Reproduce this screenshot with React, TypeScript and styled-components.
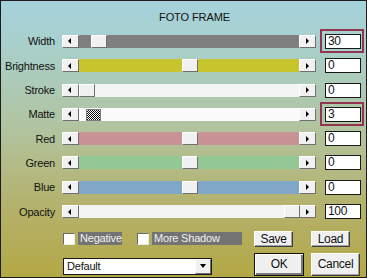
import React from 'react';
import styled, { createGlobalStyle, css } from 'styled-components';

const FONT = `"Liberation Sans", Arial, sans-serif`;

const Global = createGlobalStyle`
  html, body { margin: 0; padding: 0; background: #ffffff; }
  * { box-sizing: border-box; }
`;

const Dialog = styled.div`
  width: 367px;
  height: 278px;
  border: 1px solid #1c1c1c;
  background: linear-gradient(
    to bottom,
    #a5d2dd 0%,
    #a9cfc8 18%,
    #aec8ae 36%,
    #b1c39c 48%,
    #b3b982 62%,
    #b4b066 78%,
    #b3a846 100%
  );
  font-family: ${FONT};
  font-size: 11px;
  letter-spacing: -0.2px;
  color: #111;
  display: flex;
  flex-direction: column;
  overflow: hidden;
`;

const Title = styled.div`
  height: 28.35px;
  padding-top: 10px;
  padding-left: 22px;
  text-align: center;
  font-size: 11px;
  line-height: 13px;
  letter-spacing: -0.1px;
`;

const Rows = styled.div`
  display: flex;
  flex-direction: column;
`;

const Row = styled.div`
  height: 24.3px;
  display: flex;
  align-items: center;
`;

const Label = styled.div`
  width: 54px;
  text-align: right;
  line-height: 14px;
  white-space: nowrap;
`;

const Slider = styled.div`
  margin-left: 7px;
  width: 254px;
  height: 13px;
  display: flex;
`;

const raised = css`
  background: #f1f1f1;
  border-top: 1px solid #ffffff;
  border-left: 1px solid #ffffff;
  border-right: 1px solid #6f6f6f;
  border-bottom: 1px solid #6f6f6f;
`;

const ArrowBtn = styled.div`
  ${raised};
  width: 17px;
  height: 13px;
  flex: none;
  display: flex;
  align-items: center;
  justify-content: center;
`;

const Tri = styled.span<{ $dir: 'left' | 'right' }>`
  width: 0;
  height: 0;
  border-top: 3px solid transparent;
  border-bottom: 3px solid transparent;
  ${(p) =>
    p.$dir === 'left'
      ? css`border-right: 3px solid #000; margin-left: -2px;`
      : css`border-left: 3px solid #000; margin-left: 0px;`}
`;

const Track = styled.div<{ $bg: string }>`
  flex: 1;
  position: relative;
  background: ${(p) => p.$bg};
`;

const Thumb = styled.div<{ $checker?: boolean }>`
  position: absolute;
  top: 0;
  width: 16px;
  height: 13px;
  ${(p) =>
    p.$checker
      ? css`
          top: 1px;
          width: 15px;
          height: 12px;
          border: 1px solid #7a7a7a;
          background-color: #ffffff;
          background-image: repeating-conic-gradient(#111 0% 25%, #fff 0% 50%);
          background-size: 2px 2px;
        `
      : raised}
`;

const NumWrap = styled.div`
  position: relative;
  margin-left: 9px;
`;

const NumBox = styled.div`
  width: 36px;
  height: 15px;
  background: #ffffff;
  border: 1px solid #1a1a1a;
  padding-left: 2px;
  line-height: 13px;
  font-size: 12px;
  letter-spacing: -0.3px;
`;

const Highlight = styled.span`
  position: absolute;
  left: -5px;
  right: -3px;
  top: -5px;
  bottom: -4px;
  border: 2px solid #933451;
  pointer-events: none;
`;

const Bottom = styled.div`
  display: flex;
  padding-left: 62px;
  padding-top: 7px;
`;

const LeftPane = styled.div`
  width: 191px;
  display: flex;
  flex-direction: column;
`;

const CheckRow = styled.div`
  height: 16px;
  display: flex;
  align-items: center;
`;

const CheckBox = styled.span`
  width: 12px;
  height: 12px;
  flex: none;
  background: #ffffff;
  border-top: 1px solid #6a6a6a;
  border-left: 1px solid #6a6a6a;
  border-right: 1px solid #e8e8e8;
  border-bottom: 1px solid #e8e8e8;
`;

const CheckLabel = styled.span<{ $w: number }>`
  width: ${(p) => p.$w}px;
  height: 13px;
  margin-left: 3px;
  background: #737373;
  color: #f2f2f2;
  padding-left: 2px;
  line-height: 13px;
  white-space: nowrap;
`;

const Gap = styled.span<{ $w: number }>`
  width: ${(p) => p.$w}px;
  flex: none;
`;

const Select = styled.div`
  margin-top: 11px;
  width: 149px;
  height: 17px;
  background: #ffffff;
  border: 1px solid #1a1a1a;
  display: flex;
  align-items: center;
  justify-content: space-between;
  padding-left: 3px;
  line-height: 15px;
`;

const SelectBtn = styled.div`
  ${raised};
  width: 16px;
  height: 15px;
  display: flex;
  align-items: center;
  justify-content: center;
`;

const DownTri = styled.span`
  width: 0;
  height: 0;
  border-left: 3.5px solid transparent;
  border-right: 3.5px solid transparent;
  border-top: 4px solid #000;
`;

const ButtonGrid = styled.div`
  display: grid;
  grid-template-columns: 50px 49px;
  grid-template-rows: 16px 23px;
  column-gap: 7px;
  row-gap: 6px;
`;

const Button = styled.div<{ $small?: boolean; $default?: boolean }>`
  background: #f0f0f0;
  border-top: 1px solid #ffffff;
  border-left: 1px solid #ffffff;
  border-right: 1px solid #404040;
  border-bottom: 1px solid #404040;
  box-shadow: inset -1px -1px 0 #a0a0a0;
  display: flex;
  align-items: center;
  justify-content: center;
  line-height: 14px;
  font-size: 12px;
  letter-spacing: -0.3px;
  color: #111;
  ${(p) => p.$small && css`width: 39px;`}
  ${(p) =>
    p.$default &&
    css`
      border: 1px solid #111;
      box-shadow: inset 1px 1px 0 #ffffff, inset -2px -2px 0 #7a7a7a;
    `}
`;

type SliderRow = {
  label: string;
  value: string;
  bg: string;
  pos: number;
  checker?: boolean;
  mark?: boolean;
};

const SPAN = 205;

const rows: SliderRow[] = [
  { label: 'Width', value: '30', bg: '#7f7f7f', pos: 12 / SPAN, mark: true },
  { label: 'Brightness', value: '0', bg: '#c8c42e', pos: 0.5 },
  { label: 'Stroke', value: '0', bg: '#f4f4f4', pos: 0 },
  { label: 'Matte', value: '3', bg: '#fbfbfb', pos: 7 / SPAN, checker: true, mark: true },
  { label: 'Red', value: '0', bg: '#c99395', pos: 0.5 },
  { label: 'Green', value: '0', bg: '#93c794', pos: 0.5 },
  { label: 'Blue', value: '0', bg: '#80a7c8', pos: 0.5 },
  { label: 'Opacity', value: '100', bg: '#f4f4f4', pos: 1 },
];

export default function App() {
  return (
    <>
      <Global />
      <Dialog>
        <Title>FOTO FRAME</Title>
        <Rows>
          {rows.map((r) => (
            <Row key={r.label}>
              <Label>{r.label}</Label>
              <Slider>
                <ArrowBtn>
                  <Tri $dir="left" />
                </ArrowBtn>
                <Track $bg={r.bg}>
                  <Thumb $checker={r.checker} style={{ left: Math.round(r.pos * SPAN) }} />
                </Track>
                <ArrowBtn>
                  <Tri $dir="right" />
                </ArrowBtn>
              </Slider>
              <NumWrap>
                <NumBox>{r.value}</NumBox>
                {r.mark && <Highlight />}
              </NumWrap>
            </Row>
          ))}
        </Rows>
        <Bottom>
          <LeftPane>
            <CheckRow>
              <CheckBox />
              <CheckLabel $w={44}>Negative</CheckLabel>
              <Gap $w={15} />
              <CheckBox />
              <CheckLabel $w={90}>More Shadow</CheckLabel>
            </CheckRow>
            <Select>
              <span>Default</span>
              <SelectBtn>
                <DownTri />
              </SelectBtn>
            </Select>
          </LeftPane>
          <ButtonGrid>
            <Button $small>Save</Button>
            <Button $small>Load</Button>
            <Button $default>OK</Button>
            <Button>Cancel</Button>
          </ButtonGrid>
        </Bottom>
      </Dialog>
    </>
  );
}
